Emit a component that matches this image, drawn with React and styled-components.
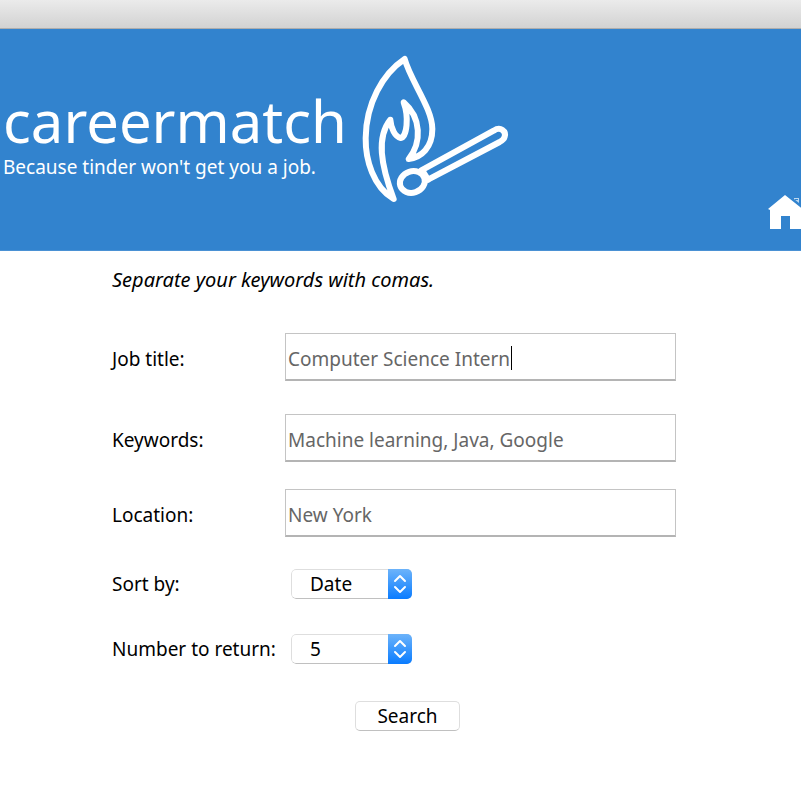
import React from "react";
import styled, { createGlobalStyle } from "styled-components";

const GlobalStyle = createGlobalStyle`
  *, *::before, *::after { box-sizing: border-box; }
  body {
    margin: 0;
    background: #fff;
    color: #000;
    font: 19px/28px "Noto Sans", "Open Sans", sans-serif;
    overflow-x: hidden;
  }
`;

const TitleBar = styled.div`
  height: 29px;
  background: linear-gradient(#ebebeb, #d2d2d2);
  border-bottom: 1px solid #adadad;
`;

const Header = styled.header`
  display: flex;
  align-items: flex-start;
  height: 222px;
  padding-left: 3px;
  background: #3283ce;
  border-bottom: 1px solid #4a91d4;
  color: #fff;
  overflow: hidden;
`;

const Brand = styled.div`
  flex: none;
  width: 347px;
  padding-top: 60px;
  white-space: nowrap;
`;

const Title = styled.h1`
  margin: 0;
  font-size: 58px;
  font-weight: 400;
  line-height: 64px;
`;

const Tagline = styled.p`
  margin: 0;
`;

const Logo = styled.svg`
  flex: none;
  width: 170px;
  height: 170px;
  margin-top: 16px;
`;

const HomeLink = styled.a`
  flex: none;
  align-self: flex-end;
  margin: 0 -4px 20px auto;
  color: #fff;
  line-height: 0;
`;

const Form = styled.form`
  padding: 15px 125px 40px 112px;
`;

const Hint = styled.p`
  margin: 0 0 39px;
  font-size: 20px;
  font-style: italic;
`;

const Row = styled.div`
  display: grid;
  grid-template-columns: 173px minmax(0, 1fr);
  align-items: center;
  margin-bottom: ${({ $gap }) => $gap}px;
`;

const Label = styled.label`
  padding-top: ${({ $drop }) => $drop}px;
  white-space: nowrap;
`;

const FieldBox = styled.div`
  position: relative;
  display: flex;
`;

const Input = styled.input`
  width: 100%;
  height: 48px;
  padding: 4px 2px 0;
  border: 1px solid #c4c4c4;
  border-bottom: 2px solid #b4b4b4;
  border-radius: 0;
  outline: 0;
  background: #fff;
  color: #666;
  font: inherit;
  caret-color: transparent;
`;

const Caret = styled.span`
  position: absolute;
  top: 13px;
  left: 226px;
  width: 1px;
  height: 24px;
  background: #000;
`;

const SelectBox = styled.div`
  display: grid;
  grid-template-columns: 97px 24px;
  width: 121px;
  height: 30px;
  margin-left: 6px;
  border-radius: 5px;
  overflow: hidden;
`;

const Select = styled.select`
  grid-area: 1 / 1 / 2 / 3;
  appearance: none;
  width: 100%;
  height: 30px;
  padding: 0 28px 0 18px;
  border: 1px solid #dedede;
  border-bottom-color: #c0c0c0;
  border-radius: 5px;
  background: #fff;
  color: #000;
  font: inherit;
  line-height: 28px;
`;

const Stepper = styled.svg`
  grid-area: 1 / 2;
  z-index: 1;
  width: 24px;
  height: 30px;
  background: linear-gradient(#6cb3fa, #0a7cff);
  pointer-events: none;
`;

const Actions = styled.div`
  padding: 0 0 0 243px;
`;

const SearchButton = styled.button`
  display: block;
  width: 105px;
  height: 30px;
  padding: 0;
  border: 1px solid #dedede;
  border-bottom-color: #c0c0c0;
  border-radius: 5px;
  background: #fff;
  color: #000;
  font: inherit;
  line-height: 28px;
`;

function MatchLogo() {
  return (
    <Logo viewBox="0 0 510 510" fill="none" stroke="#fff" strokeWidth="18" strokeLinecap="round" strokeLinejoin="round" aria-hidden="true">
      <path d="M131 462C70 426 46 344 47 279C48 176 98 86 164 42C182 108 247 190 247 252C247 307 215 337 176 342C216 292 214 218 161 172C177 215 171 276 152 279C135 276 123 250 121 224C79 277 92 359 131 462Z" />
      <ellipse cx="187" cy="411" rx="38" ry="32" transform="rotate(-18 187 411)" />
      <path d="M214 376L431 257C452 243 469 259 464 275C462 283 456 287 449 291L234 404" />
      <path d="M219 380L234 404" />
    </Logo>
  );
}

function HomeIcon() {
  return (
    <svg width="37" height="36" viewBox="0 0 37 36" fill="currentColor" aria-hidden="true">
      <path d="M0 15L17 1L36 16L34 17V35H22V22H13V35H2V16Z" />
      <path d="M26 4H31V9L26 5Z" fill="#bcd8f0" />
      <path d="M27 5H30V6H27Z" fill="#3283ce" />
    </svg>
  );
}

function TextField({ id, label, value, gap, caret }) {
  return (
    <Row $gap={gap}>
      <Label htmlFor={id} $drop={3}>{label}</Label>
      <FieldBox>
        <Input id={id} type="text" defaultValue={value} />
        {caret && <Caret aria-hidden="true" />}
      </FieldBox>
    </Row>
  );
}

function SelectField({ id, label, options, gap }) {
  return (
    <Row $gap={gap}>
      <Label htmlFor={id} $drop={0}>{label}</Label>
      <SelectBox>
        <Select id={id}>
          {options.map((option) => (
            <option key={option}>{option}</option>
          ))}
        </Select>
        <Stepper viewBox="0 0 24 30" fill="none" stroke="#fff" strokeWidth="2" strokeLinecap="round" strokeLinejoin="round" aria-hidden="true">
          <path d="M7 12L12 7L17 12M7 18L12 23L17 18" />
        </Stepper>
      </SelectBox>
    </Row>
  );
}

export default function App() {
  return (
    <>
      <GlobalStyle />
      <TitleBar />
      <Header>
        <Brand>
          <Title>careermatch</Title>
          <Tagline>Because tinder won't get you a job.</Tagline>
        </Brand>
        <MatchLogo />
        <HomeLink href="#" aria-label="Home">
          <HomeIcon />
        </HomeLink>
      </Header>
      <Form onSubmit={(event) => event.preventDefault()}>
        <Hint>Separate your keywords with comas.</Hint>
        <TextField id="title" label="Job title:" value="Computer Science Intern" gap={33} caret />
        <TextField id="keywords" label="Keywords:" value="Machine learning, Java, Google" gap={27} />
        <TextField id="location" label="Location:" value="New York" gap={32} />
        <SelectField id="sort" label="Sort by:" options={["Date", "Relevance"]} gap={35} />
        <SelectField id="count" label="Number to return:" options={["5", "10", "20"]} gap={37} />
        <Actions>
          <SearchButton type="submit">Search</SearchButton>
        </Actions>
      </Form>
    </>
  );
}
